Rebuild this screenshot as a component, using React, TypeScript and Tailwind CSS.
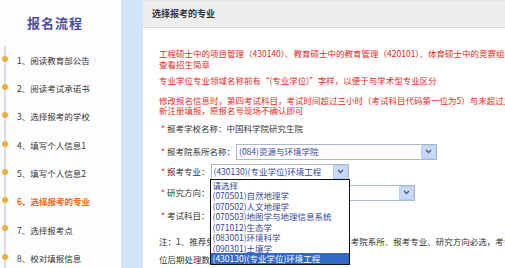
import React from "react";

const steps = [
  "阅读教育部公告",
  "阅读考试承诺书",
  "选择报考的学校",
  "填写个人信息1",
  "填写个人信息2",
  "选择报考的专业",
  "选择报考点",
  "校对填报信息",
];

const majors = [
  "请选择",
  "(070501)自然地理学",
  "(070502)人文地理学",
  "(070503)地图学与地理信息系统",
  "(071012)生态学",
  "(083001)环境科学",
  "(090301)土壤学",
  "(430130)(专业学位)环境工程",
];

function Arrow() {
  return (
    <div className="flex h-[14px] w-[15px] shrink-0 items-center justify-center rounded-[1px] border border-[#b9cbef] bg-[#c9d8f6]">
      <svg width="7" height="5" viewBox="0 0 7 5">
        <path d="M1 1 L3.5 3.6 L6 1" fill="none" stroke="#4b5f8c" strokeWidth="1.4" />
      </svg>
    </div>
  );
}

function Select({ className, value }: { className: string; value: string }) {
  return (
    <div
      className={`flex h-[16px] items-center border border-[#a9b8cb] bg-white pr-[0px] text-[#34479a] ${className}`}
    >
      <span className="flex-1 overflow-hidden whitespace-nowrap pl-[2px]">{value}</span>
      <Arrow />
    </div>
  );
}

function Label({ text }: { text: string }) {
  return (
    <>
      <span className="w-[6px] text-[#e8291c]">*</span>
      <span className="whitespace-nowrap">{text}</span>
    </>
  );
}

export default function App() {
  return (
    <div
      className="flex h-[268px] w-[505px] overflow-hidden bg-white text-[#333]"
      style={{ fontFamily: '"Noto Sans CJK SC", "Noto Sans", sans-serif' }}
    >
      {/* SIDEBAR */}
      <aside className="h-full w-[121px] shrink-0 bg-[#fdfdfe]">
        <div className="flex h-[46px] items-center pl-[27px] text-[13px] font-bold tracking-[1px] text-[#4c4f9c]">
          报名流程
        </div>
        <ul className="ml-[4px] h-[230px] border-l-[2px] border-[#dcdce6] text-[8.5px]">
          {steps.map((s, i) => (
            <li key={s} className="flex h-[28.3px] items-center">
              <span className="-ml-[4px] mb-[3px] h-[6px] w-[6px] shrink-0 rounded-full bg-[#f6ae3a]" />
              <span
                className={`ml-[9px] whitespace-nowrap ${
                  i === 5 ? "font-bold text-[#f26a1c]" : "text-[#333]"
                }`}
              >
                {i + 1}、{s}
              </span>
            </li>
          ))}
        </ul>
      </aside>

      {/* blue strip */}
      <div className="h-full w-[22px] shrink-0 bg-[#d2e4f7]" />

      {/* MAIN PANEL */}
      <main className="flex h-full min-w-0 flex-1 flex-col overflow-hidden">
        <header className="flex h-[28px] shrink-0 items-center border-b border-t border-[#d6d6d6] border-t-[#e4e4e4] bg-[#eeeeee] pl-[9px] text-[9px] font-bold text-[#333]">
          选择报考的专业
        </header>

        <section className="pl-[16px] pt-[20px] text-[8.5px]">
          <p className="whitespace-nowrap leading-[10.5px] text-[#e8291c]">
            工程硕士中的项目管理（430140）、教育硕士中的教育管理（420101）、体育硕士中的竞赛组织（450103）等专业请
            <br />
            查看招生简章
          </p>
          <p className="mt-[6px] whitespace-nowrap leading-[10.5px] text-[#e8291c]">
            专业学位专业领域名称前有“(专业学位)”字样，以便于与学术型专业区分
          </p>
          <p className="mt-[9px] whitespace-nowrap leading-[10.5px] text-[#e8291c]">
            修改报名信息时，第四考试科目，考试时间超过三小时（考试科目代码第一位为5）与未超过三小时的需重
            <br />
            新注册填报，原报名号现场不确认即可
          </p>

          <div className="ml-[2px] mt-[3px] flex h-[20px] items-center">
            <Label text="报考学校名称：中国科学院研究生院" />
          </div>

          <div className="ml-[2px] mt-[3px] flex h-[20px] items-center">
            <Label text="报考院系所名称：" />
            <Select className="ml-[1px] w-[201px]" value="(084)资源与环境学院" />
          </div>

          <div className="ml-[2px] flex h-[20px] items-center">
            <Label text="报考专业：" />
            <div className="relative ml-[1px]">
              <Select className="w-[138px]" value="(430130)(专业学位)环境工程" />
              <ul className="absolute left-[-1px] top-[15px] z-10 w-[140px] border border-[#111] bg-white text-[#34479a]">
                {majors.map((m, i) => (
                  <li
                    key={m}
                    className={`h-[10.5px] whitespace-nowrap pl-[2px] leading-[10.5px] ${
                      i === majors.length - 1 ? "bg-[#3169c6] text-white" : ""
                    }`}
                  >
                    {m}
                  </li>
                ))}
              </ul>
            </div>
          </div>

          <div className="ml-[2px] mt-[1px] flex h-[20px] items-center">
            <Label text="研究方向：" />
            <Select className="ml-[1px] w-[204px]" value="" />
          </div>

          <div className="ml-[2px] mt-[3px] flex h-[20px] items-center">
            <Label text="考试科目：" />
          </div>

          <p className="mt-[6px] whitespace-nowrap leading-[18px]">
            注：1、推荐免试生（推免生）只需在本页面选择报考院系所、报考专业、研究方向必选，考试科目可不选，由招生单
            <br />
            位后期处理数据。
          </p>
        </section>
      </main>
    </div>
  );
}
